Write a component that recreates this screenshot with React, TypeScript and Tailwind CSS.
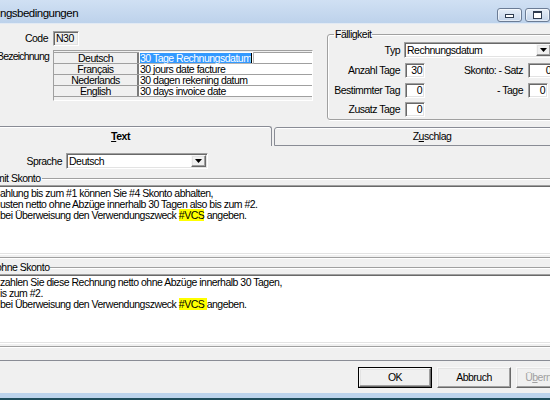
import React from "react";

const sunken =
  "border border-t-[#a0a0a0] border-l-[#a0a0a0] border-r-white border-b-white shadow-[inset_1px_1px_0_#696969,inset_-1px_-1px_0_#e3e3e3]";
const raised =
  "border border-t-[#f8f8f8] border-l-[#f8f8f8] border-r-[#696969] border-b-[#696969] shadow-[inset_-1px_-1px_0_#a0a0a0,inset_1px_1px_0_#e3e3e3]";
const etched =
  "border border-[#a0a0a0] shadow-[inset_1px_1px_0_#ffffff,1px_1px_0_#ffffff]";

function Arrow() {
  return (
    <svg width="7" height="4" viewBox="0 0 7 4">
      <polygon points="0,0 7,0 3.5,4" fill="#000" />
    </svg>
  );
}

function RLabel({ className, children }: { className: string; children: React.ReactNode }) {
  return <div className={`flex justify-end whitespace-nowrap ${className}`}>{children}</div>;
}

function Combo({ value, className }: { value: string; className: string }) {
  return (
    <div className={`flex items-stretch bg-white p-px ${sunken} ${className}`}>
      <div className="flex-1 pl-px leading-[12px] whitespace-nowrap overflow-hidden">{value}</div>
      <div className={`w-[15px] bg-[#f0f0f0] flex items-center justify-center ${raised}`}>
        <Arrow />
      </div>
    </div>
  );
}

function NumBox({ value, className, bg = "bg-white" }: { value: string; className: string; bg?: string }) {
  return (
    <div className={`h-[15px] p-px ${bg} ${sunken} ${className} flex items-center justify-end pr-[2px] leading-[11px]`}>
      {value}
    </div>
  );
}

function Btn({ children, def, disabled }: { children: React.ReactNode; def?: boolean; disabled?: boolean }) {
  return (
    <div className={`w-[74px] h-[21px] ${def ? "border border-black" : ""}`}>
      <div
        className={`h-full w-full bg-[#f0f0f0] flex items-center justify-center ${raised} ${
          disabled ? "text-[#a0a0a0]" : ""
        }`}
      >
        {children}
      </div>
    </div>
  );
}

const rows: [string, string][] = [
  ["Deutsch", "30 Tage Rechnungsdatum"],
  ["Français", "30 jours date facture"],
  ["Nederlands", "30 dagen rekening datum"],
  ["English", "30 days invoice date"],
];

function Group({ label, children }: { label: string; children: React.ReactNode }) {
  return (
    <fieldset className={`-ml-[12px] w-[640px] pl-[6px] pb-[2px] rounded-[2px] ${etched}`}>
      <legend className="px-px leading-[13px]">{label}</legend>
      {children}
    </fieldset>
  );
}

function TextArea({ lines }: { lines: React.ReactNode[] }) {
  return (
    <div className={`h-[70px] bg-white p-px ${sunken}`}>
      <div className="pl-[3px] pt-px leading-[11px] whitespace-nowrap">
        {lines.map((l, i) => (
          <div key={i}>{l}</div>
        ))}
      </div>
    </div>
  );
}

export default function App() {
  return (
    <div className="w-[550px] h-[400px] overflow-hidden bg-[#f0f0f0] text-black text-[10.5px] tracking-[-0.5px] leading-[13px] font-['Liberation_Sans',Arial,sans-serif]">
      {/* title bar */}
      <div className="h-[23px] flex bg-linear-to-b from-[#d0e0f3] to-[#bdd2eb]">
        <div className="w-[510px] pt-[6px] text-[11.5px] tracking-[-0.5px] leading-[14px] whitespace-nowrap">
          ngsbedingungen
        </div>
        <div className="flex gap-[3px] pt-[8px]">
          <div className="w-[25px] h-[14px] rounded-[3px] border border-[#6b7c95] bg-linear-to-b from-[#e6eef8] to-[#c3d4ea] shadow-[inset_0_0_0_1px_rgba(255,255,255,0.55)] flex items-center justify-center">
            <div className="w-[9px] h-[4px] mt-[2px] bg-white border border-[#2d3b50]" />
          </div>
          <div className="w-[25px] h-[14px] rounded-[3px] border border-[#6b7c95] bg-linear-to-b from-[#e6eef8] to-[#c3d4ea] shadow-[inset_0_0_0_1px_rgba(255,255,255,0.55)] flex items-center justify-center">
            <div className="w-[9px] h-[8px] bg-white border border-[#2d3b50] border-t-2" />
          </div>
        </div>
      </div>
      <div className="h-px bg-[#e2eaf4]" />

      <div className="w-[640px] flex flex-col">
        {/* top section */}
        <div className="h-[102px] flex items-start">
          <div className="w-[327px] pt-[7px]">
            <div className="flex h-[15px] items-center">
              <RLabel className="w-[48px]">Code</RLabel>
              <div className={`ml-[5px] w-[26px] h-[15px] p-px bg-[#f0f0f0] ${sunken} pl-[2px] leading-[11px]`}>N30</div>
            </div>
            <div className="flex mt-[4px]">
              <RLabel className="w-[49px] tracking-[-0.8px]">Bezeichnung</RLabel>
              <div className="ml-[4px] w-[260px] h-[51px] border border-t-[#a0a0a0] border-l-[#a0a0a0] border-r-white border-b-white pt-px bg-[#f0f0f0]">
                <div className="border-t border-[#a0a0a0]">
                  {rows.map((r, i) => (
                    <div key={i} className="flex h-[11px] border-b border-[#a0a0a0]">
                      <div className="w-[85px] text-center leading-[10px] border-r-2 border-[#7a7a7a] bg-[#f0f0f0]">
                        {r[0]}
                      </div>
                      <div className="flex-1 bg-white relative leading-[10px] pl-px whitespace-nowrap">
                        {i === 0 ? (
                          <div className="absolute left-0 -top-px w-[115px] h-[12px] bg-white border-r border-b border-[#b4b4b4] pl-px pt-px leading-[10px] flex">
                            <span className="bg-[#3399ff] text-white">{r[1]}</span>
                            <span className="w-px h-[10px] bg-black" />
                          </div>
                        ) : (
                          r[1]
                        )}
                      </div>
                    </div>
                  ))}
                </div>
              </div>
            </div>
          </div>

          {/* Fälligkeit */}
          <div className="pt-[4px]">
            <fieldset className={`w-[260px] pl-[6px] pb-[2px] rounded-[3px] ${etched}`}>
              <legend className="px-px leading-[13px]">Fälligkeit</legend>
              <div className="flex items-center h-[16px] mt-px">
                <RLabel className="w-[66px]">Typ</RLabel>
                <Combo value="Rechnungsdatum" className="ml-[4px] w-[149px] h-[16px]" />
              </div>
              <div className="flex items-center mt-[5px]">
                <RLabel className="w-[66px]">Anzahl Tage</RLabel>
                <NumBox value="30" className="ml-[5px] w-[20px]" />
                <RLabel className="w-[98px]">Skonto: - Satz</RLabel>
                <NumBox value="0" className="ml-[5px] w-[26px]" />
              </div>
              <div className="flex items-center mt-[5px]">
                <RLabel className="w-[66px]">Bestimmter Tag</RLabel>
                <NumBox value="0" className="ml-[5px] w-[20px]" />
                <RLabel className="w-[98px]">- Tage</RLabel>
                <NumBox value="0" className="ml-[5px] w-[20px]" />
              </div>
              <div className="flex items-center mt-[4px]">
                <RLabel className="w-[66px]">Zusatz Tage</RLabel>
                <NumBox value="0" className="ml-[5px] w-[20px]" />
              </div>
            </fieldset>
          </div>
        </div>

        {/* tabs */}
        <div className="h-[20px] flex items-start">
          <div className="-ml-[30px] w-[302px] h-[20px] border-t border-r border-[#898c95] rounded-tr-[3px] bg-[#f0f0f0] shadow-[inset_0_1px_0_#ffffff] flex items-center justify-center font-bold">
            <span>
              <span className="underline">T</span>ext
            </span>
          </div>
          <div className="ml-[2px] mt-px w-[316px] h-[19px] border border-[#898c95] rounded-t-[3px] bg-[#f0f0f0] shadow-[inset_0_1px_0_#ffffff] flex items-center justify-center">
            <span>
              Z<span className="underline">u</span>schlag
            </span>
          </div>
        </div>

        {/* panel */}
        <div className="h-[215px] border-b border-[#898c95] pt-[7px] flex flex-col">
          <div className="flex items-center h-[16px]">
            <RLabel className="w-[62px]">Sprache</RLabel>
            <Combo value="Deutsch" className="ml-[4px] w-[142px] h-[16px]" />
          </div>
          <div className="mt-[3px]">
            <Group label="mit Skonto">
              <TextArea
                lines={[
                  "ahlung bis zum #1 können Sie #4 Skonto abhalten,",
                  "usten netto ohne Abzüge innerhalb 30 Tagen also bis zum #2.",
                  <>
                    bei Überweisung den Verwendungszweck <span className="bg-[#ffff00]">#VCS</span> angeben.
                  </>,
                ]}
              />
            </Group>
          </div>
          <div className="mt-[3px]">
            <Group label="ohne Skonto">
              <TextArea
                lines={[
                  "zahlen Sie diese Rechnung netto ohne Abzüge innerhalb 30 Tagen,",
                  "is zum #2.",
                  <>
                    bei Überweisung den Verwendungszweck <span className="bg-[#ffff00]">#VCS </span>angeben.
                  </>,
                ]}
              />
            </Group>
          </div>
        </div>

        {/* buttons */}
        <div className="mt-[6px] h-[21px] flex pl-[358px] gap-[5px]">
          <Btn def>OK</Btn>
          <Btn>Abbruch</Btn>
          <Btn disabled>
            <span>
              Ü<span className="underline">b</span>ernehmen
            </span>
          </Btn>
        </div>
        <div className="h-[5px]" />
      </div>

      <div className="h-[5px] bg-[#bcd3ec]" />
      <div className="h-[2px] bg-[#1f4d5c]" />
    </div>
  );
}
